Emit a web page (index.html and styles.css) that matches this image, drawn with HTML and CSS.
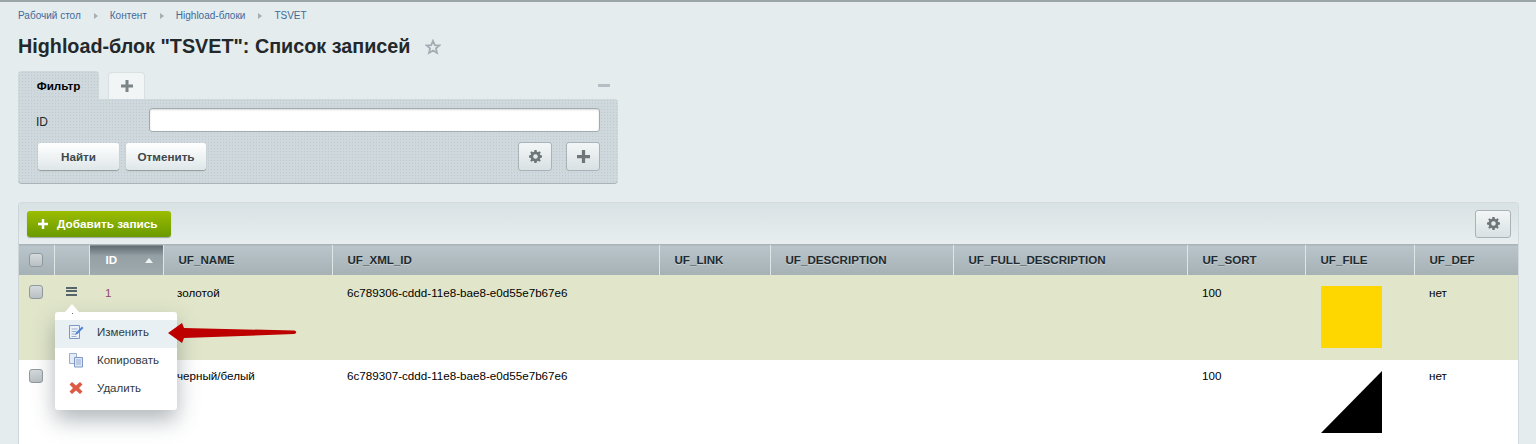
FILE: index.html
```html
<!DOCTYPE html>
<html lang="ru">
<head>
    <meta charset="UTF-8">
    <title>Highload-блок "TSVET": Список записей</title>
    <link rel="stylesheet" href="styles.css">
</head>
<body>
    <svg class="defs" width="0" height="0">
        <symbol id="gear" viewBox="0 0 14 14">
            <path fill="#6e7678" fill-rule="evenodd" d="M5.8 0h2.4l.3 1.900 1.200.5L11.300 1.300 12.700 2.700l-1.100 1.600.5 1.200 1.900.3v2.400l-1.900.3-.5 1.200 1.100 1.600-1.400 1.400-1.600-1.100-1.200.5-.3 1.900H5.800l-.3-1.900-1.200-.5-1.600 1.100-1.400-1.400 1.100-1.600-.5-1.200L0 8.200V5.800l1.900-.3.5-1.200L1.300 2.700 2.700 1.300l1.600 1.100 1.200-.5zM7 4.500a2.500 2.500 0 1 0 0 5 2.500 2.500 0 0 0 0-5z"/>
        </symbol>
        <symbol id="plus" viewBox="0 0 12 12">
            <path d="M4.500 0h3v4.500H12v3H7.500V12h-3V7.500H0v-3h4.500z"/>
        </symbol>
    </svg>

    <!-- Breadcrumbs -->
    <div class="crumbs">
        <a>Рабочий стол</a><i></i><a>Контент</a><i></i><a>Highload-блоки</a><i></i><a>TSVET</a>
    </div>

    <h1 class="title">
        Highload-блок "TSVET": Список записей
        <svg class="star" width="16" height="16" viewBox="0 0 16 16"><path fill="none" stroke="#a3adb3" stroke-width="1.800" d="M8 1.800l1.800 4.300 4.600.3-3.500 3 1.100 4.500L8 11.500l-4 2.400 1.100-4.500-3.500-3 4.600-.3z"/></svg>
    </h1>

    <!-- Filter -->
    <div class="filter">
        <div class="tabs">
            <div class="tab-active">Фильтр</div>
            <div class="tab-add"><svg width="12" height="12" fill="#7b8487"><use href="#plus"/></svg></div>
            <div class="minimize"></div>
        </div>
        <div class="filter-panel">
            <div class="filter-row">
                <label>ID</label>
                <input type="text" class="filter-input">
            </div>
            <div class="filter-buttons">
                <button class="btn btn-find">Найти</button>
                <button class="btn btn-cancel">Отменить</button>
                <div class="spacer"></div>
                <button class="icon-btn"><svg width="13" height="13"><use href="#gear"/></svg></button>
                <button class="icon-btn"><svg width="13" height="13" fill="#6e7678"><use href="#plus"/></svg></button>
            </div>
        </div>
    </div>

    <!-- List -->
    <div class="list">
        <div class="toolbar">
            <button class="btn-add"><svg width="10" height="10" fill="#fff"><use href="#plus"/></svg>Добавить запись</button>
            <button class="icon-btn toolbar-gear"><svg width="13" height="13"><use href="#gear"/></svg></button>
        </div>
        <table class="grid">
            <colgroup>
                <col class="c-check"><col class="c-menu"><col class="c-id"><col class="c-name"><col class="c-xml"><col class="c-link"><col class="c-desc"><col class="c-full"><col class="c-sort"><col class="c-file"><col>
            </colgroup>
            <thead>
                <tr>
                    <th><span class="check"></span></th>
                    <th></th>
                    <th class="sorted">ID<span class="sort-arrow"></span></th>
                    <th>UF_NAME</th>
                    <th>UF_XML_ID</th>
                    <th>UF_LINK</th>
                    <th>UF_DESCRIPTION</th>
                    <th>UF_FULL_DESCRIPTION</th>
                    <th>UF_SORT</th>
                    <th>UF_FILE</th>
                    <th>UF_DEF</th>
                </tr>
            </thead>
            <tbody>
                <tr class="selected">
                    <td><span class="check"></span></td>
                    <td><span class="burger"></span></td>
                    <td class="id-cell">1</td>
                    <td class="name-cell">золотой</td>
                    <td>6c789306-cddd-11e8-bae8-e0d55e7b67e6</td>
                    <td></td><td></td><td></td>
                    <td>100</td>
                    <td class="file-cell"><div class="swatch-gold"></div></td>
                    <td>нет</td>
                </tr>
                <tr>
                    <td><span class="check"></span></td>
                    <td></td>
                    <td></td>
                    <td class="name-cell">черный/белый</td>
                    <td>6c789307-cddd-11e8-bae8-e0d55e7b67e6</td>
                    <td></td><td></td><td></td>
                    <td>100</td>
                    <td class="file-cell"><svg class="swatch-tri" width="61" height="62"><path d="M61 0V62H0z"/></svg></td>
                    <td>нет</td>
                </tr>
            </tbody>
        </table>
    </div>

    <!-- Row action menu -->
    <div class="menu">
        <div class="menu-item active">
            <svg width="16" height="16" viewBox="0 0 16 16"><path fill="#eef3fa" stroke="#7d97c4" d="M1.500 1.500h10v13h-10z"/><path stroke="#9aaed0" d="M3.500 5h6M3.500 7.500h5M3.500 10h4M3.500 12.500h5"/><path fill="#4f86d6" d="M7 11l1-2.500L14 2.500l1.500 1.500-6 6z"/></svg>
            Изменить
        </div>
        <div class="menu-item">
            <svg width="16" height="16" viewBox="0 0 16 16"><path fill="#e4ecf7" stroke="#98aed2" d="M1.500 1.500h7v10h-7z"/><path fill="#dde7f5" stroke="#7d97c4" d="M6.500 5.500h8v9.500h-8z"/><path stroke="#9aaed0" d="M8 8h5M8 10h5M8 12h5"/></svg>
            Копировать
        </div>
        <div class="menu-item">
            <svg width="16" height="16" viewBox="0 0 16 16"><path fill="#dd5b45" d="M4 2l4 3.500L12 2l2.500 2.500L11 8l3.500 3.500L12 14l-4-3.500L4 14l-2.500-2.500L5 8 1.500 4.500z"/></svg>
            Удалить
        </div>
    </div>

    <!-- Annotation arrow -->
    <svg class="arrow" width="130" height="20" viewBox="0 0 130 20"><path fill="#bd0000" d="M0 10L14 0l2 5 110 2.500c3 .5 3 3 0 3.500L16 15l-2 5z"/></svg>
</body>
</html>
```

FILE: styles.css
```css
html, body { height: 444px; overflow: hidden; }
body { position: relative; margin: 0; padding: 0 17px 0 18px; border-top: 2px solid #9aa5a8; background: #e4ecee; font-family: "Liberation Sans", Arial, sans-serif; font-size: 12px; color: #000; box-sizing: border-box; }
.defs { position: absolute; }

.crumbs { display: flex; align-items: center; height: 27px; font-size: 10px; color: #3f6a99; }
.crumbs i { width: 0; height: 0; margin: 0 12px 0 13px; border-left: 4px solid #a5afb3; border-top: 3px solid transparent; border-bottom: 3px solid transparent; }

.title { display: flex; align-items: center; height: 35px; margin: 0; font-size: 19.750px; font-weight: bold; color: #23282b; }
.star { margin-left: 15px; }

.filter { width: 600px; margin-top: 7px; }
.tabs { display: flex; align-items: flex-end; height: 28px; }
.tab-active { width: 81px; height: 28px; line-height: 30px; text-align: center; font-size: 11.700px; font-weight: bold; border-radius: 4px 4px 0 0; background: #cfd9dd radial-gradient(#bfcace 1px, transparent 1px) 0 0 / 3px 3px; }
.tab-add { display: flex; align-items: center; justify-content: center; width: 37px; height: 27px; margin-left: 9px; background: #f1f5f6; border: 1px solid #d8e0e2; border-bottom: 0; border-radius: 4px 4px 0 0; box-sizing: border-box; }
.minimize { width: 12px; height: 3px; margin: 0 8px 12px auto; background: #b5bec2; }
.filter-panel { height: 85px; padding: 9px 18px 0 18px; background: #cfd9dd radial-gradient(#bfcace 1px, transparent 1px) 0 0 / 3px 3px; border-bottom: 1px solid #a9b3b7; border-radius: 0 4px 4px 4px; box-sizing: border-box; }
.filter-row { display: flex; align-items: center; height: 24px; }
.filter-row label { width: 113px; margin-top: 3px; font-size: 12px; color: #23282b; }
.filter-input { flex: 1; height: 24px; padding: 0; border: 1px solid #a1abaf; border-radius: 3px; background: #fff; box-shadow: inset 0 1px 2px rgba(0, 0, 0, 0.15); box-sizing: border-box; }
.filter-buttons { display: flex; align-items: center; gap: 7px; margin-top: 10px; padding-left: 2px; }
.spacer { flex: 1; }
.btn { height: 27px; padding: 0 11px; border: 0; border-radius: 3px; font: bold 11.700px "Liberation Sans", Arial, sans-serif; color: #40484b; background: linear-gradient(#fff, #dfe7e9); box-shadow: 0 1px 1px rgba(0, 0, 0, 0.3); }
.btn-find { width: 81px; }
.btn-cancel { width: 80px; padding: 0; }
.icon-btn { display: flex; align-items: center; justify-content: center; width: 34px; height: 29px; margin-left: 7px; padding: 0; border: 1px solid #a9b3b7; border-radius: 3px; background: linear-gradient(#f3f6f7, #d9e1e3); }

.list { margin-top: 18px; width: 1501px; background: #fff; border-radius: 4px 4px 0 0; border: 1px solid #d2dadd; border-bottom: 0; border-left-color: #cdd5d8; box-sizing: border-box; }
.toolbar { display: flex; align-items: center; justify-content: space-between; height: 41px; padding: 0 7px 0 8px; background: linear-gradient(#d8e1e3, #e8eef0); box-sizing: border-box; }
.btn-add { display: flex; align-items: center; gap: 9px; width: 144px; height: 26px; padding: 0 0 0 11px; border: 0; border-radius: 3px; font: bold 11.750px "Liberation Sans", Arial, sans-serif; color: #fff; background: linear-gradient(#9cbd00, #6a9a00); box-shadow: 0 1px 1px rgba(0, 0, 0, 0.3); }
.toolbar-gear { width: 36px; height: 28px; margin: 0; }

.grid { width: 100%; table-layout: fixed; border-collapse: collapse; }
.c-check { width: 35px; }
.c-menu { width: 35px; }
.c-id { width: 74px; }
.c-name { width: 169px; }
.c-xml { width: 327px; }
.c-link { width: 111px; }
.c-desc { width: 183px; }
.c-full { width: 234px; }
.c-sort { width: 118px; }
.c-file { width: 109px; }
.grid th { height: 30px; padding: 0 0 0 15px; text-align: left; font-size: 11.600px; color: #1f2b30; text-shadow: 0 1px 0 rgba(255, 255, 255, 0.4); background: linear-gradient(#b9c5ca, #a5b1b5); border-left: 1px solid #dfe6e8; border-top: 1px solid #aab5ba; box-sizing: border-box; }
.grid th:first-child { padding-left: 10px; border-left: 0; }
.grid th.sorted { position: relative; padding-left: 16px; color: #fff; text-shadow: none; background: linear-gradient(#5d696f, #94a0a5 35%, #a0abaf); }
.sort-arrow { position: absolute; right: 10px; top: 13px; border-left: 4px solid transparent; border-right: 4px solid transparent; border-bottom: 5px solid #eef2f3; }
.grid td { height: 85px; padding: 11px 0 0 15px; vertical-align: top; font-size: 11.650px; line-height: 14px; box-sizing: border-box; }
.grid tr + tr td { padding-top: 9px; }
.grid td:first-child { padding-left: 10px; }
.grid tr.selected td { background: #e1e6ca; }
.grid td.name-cell { padding-left: 14px; }
.grid td.id-cell { color: #8d4a6e; padding-left: 16px; }
.grid td.file-cell { padding-top: 11px; padding-left: 16px; }
.grid tr.selected .check { margin-top: -1px; }
.swatch-gold { width: 61px; height: 62px; background: #ffd700; }
.swatch-tri { display: block; }

.check { display: block; width: 14px; height: 14px; border: 1px solid #8f9a9e; border-radius: 3px; background: linear-gradient(#d5dadc, #b9c0c3); box-sizing: border-box; }
.burger { position: relative; display: block; width: 11px; height: 9px; margin: 1px 0 0 -3px; border-top: 2px solid #566569; border-bottom: 2px solid #566569; box-sizing: border-box; }
.burger::after { content: ""; position: absolute; left: 0; right: 0; top: 1.500px; height: 2px; background: #566569; }

.menu { position: absolute; left: 55px; top: 310px; width: 122px; height: 98px; padding-top: 8px; background: #fff; border-radius: 3px; box-shadow: 0 10px 22px rgba(60, 75, 85, 0.4); box-sizing: border-box; }
.menu::before { content: ""; position: absolute; left: 10px; top: -8px; border-left: 7px solid transparent; border-right: 7px solid transparent; border-bottom: 8px solid #fff; }
.menu::after { content: ""; position: absolute; left: 17px; top: 1px; width: 1px; height: 1px; background: #6b7478; }
.menu-item { display: flex; align-items: center; gap: 13px; height: 28px; padding: 0 0 4px 13px; font-size: 11.500px; color: #2f3b40; box-sizing: border-box; }
.menu-item.active { background: #e9f0f3; }
.arrow { position: absolute; left: 168px; top: 321px; }
```
